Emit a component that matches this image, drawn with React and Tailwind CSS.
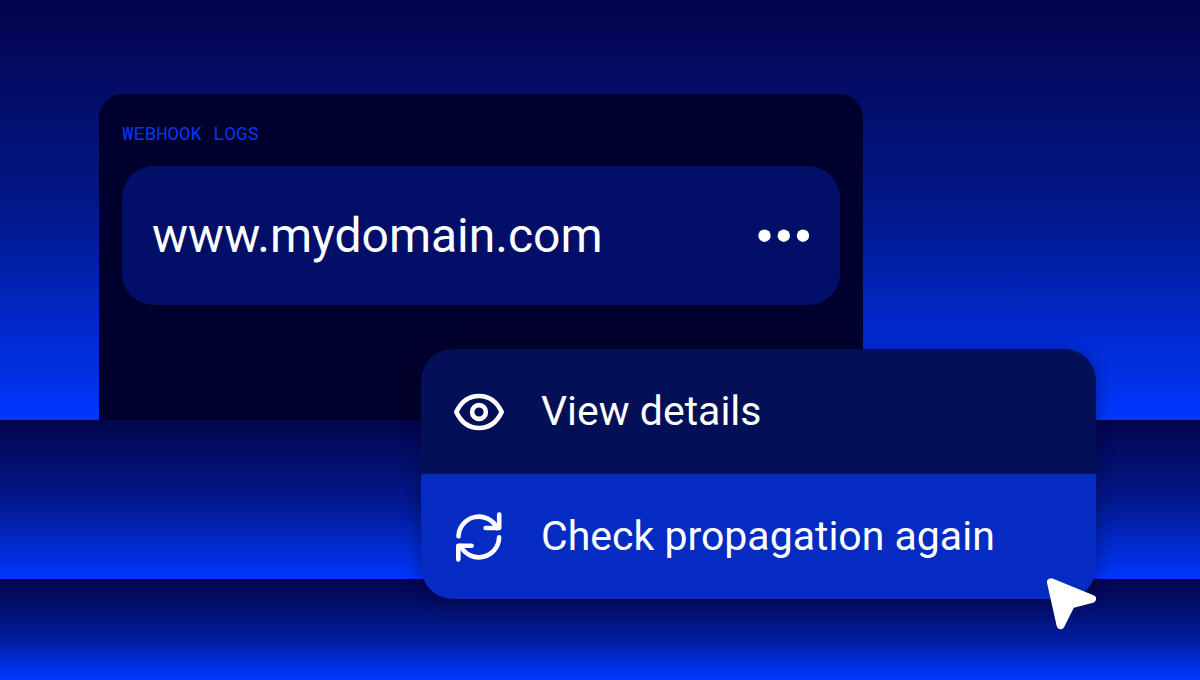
import React from "react";

const EyeIcon = () => (
  <svg
    viewBox="0 0 56 56"
    className="size-14 shrink-0"
    fill="none"
    stroke="currentColor"
    strokeWidth="4.6"
    strokeLinecap="round"
    strokeLinejoin="round"
    aria-hidden="true"
  >
    <path d="M5.3 28C10 18 18 12 28 12s18 6 22.7 16C46 38 38 44 28 44S10 38 5.3 28Z" />
    <circle cx="28" cy="28" r="6.9" />
  </svg>
);

const RefreshIcon = () => (
  <svg
    viewBox="0 0 56 56"
    className="size-14 shrink-0"
    fill="none"
    stroke="currentColor"
    strokeWidth="4.6"
    strokeLinecap="round"
    strokeLinejoin="round"
    aria-hidden="true"
  >
    <path d="M7.5 27.3A20.3 20.3 0 0 1 46 19" />
    <path d="M48.2 5.6V19H34.6" />
    <path d="M48.1 28.3A20.3 20.3 0 0 1 9.6 37" />
    <path d="M7.3 50.4V36.8H20.6" />
  </svg>
);

const DotsIcon = () => (
  <svg viewBox="0 0 52 14" className="h-[14px] w-[52px]" fill="currentColor" aria-hidden="true">
    <circle cx="6.5" cy="6.7" r="6.2" />
    <circle cx="25.8" cy="6.7" r="6.2" />
    <circle cx="45" cy="6.7" r="6.2" />
  </svg>
);

const Pointer = () => (
  <svg
    viewBox="0 0 50 52"
    className="absolute top-[229px] right-0 h-[52px] w-[50px] text-white"
    fill="currentColor"
    stroke="currentColor"
    strokeWidth="8"
    strokeLinejoin="round"
    aria-hidden="true"
  >
    <path d="M5 4.3 46 21 25 26.5 14.6 47.2Z" />
  </svg>
);

const menuItems = [
  { label: "View details", icon: EyeIcon, className: "bg-[#030f57]" },
  { label: "Check propagation again", icon: RefreshIcon, className: "bg-[#042bc2]" },
];

const ContextMenu = () => (
  <div className="absolute top-[349px] left-[421px] w-[675px]">
    <ul className="overflow-hidden rounded-[32px] shadow-[0_4px_16px_rgba(0,0,40,0.45)]">
      {menuItems.map(({ label, icon: Icon, className }) => (
        <li key={label} className={className}>
          <button type="button" className="flex h-[125px] w-full items-center gap-[34px] px-[30px] text-left text-[41px]">
            <Icon />
            {label}
          </button>
        </li>
      ))}
    </ul>
    <Pointer />
  </div>
);

const App = () => {
  return (
    <main className="relative flex min-h-screen flex-col overflow-hidden font-['Roboto',sans-serif] text-white">
      <div className="flex bg-linear-to-b/srgb from-[#04044c] via-[#02188a] to-[#0037ff] pt-[94px] pr-6 pl-[99px]">
        <section className="h-[326px] w-full max-w-[764px] rounded-t-3xl bg-[#00002c] px-[23px] pt-6">
          <h1 className="font-['Roboto_Mono','Liberation_Mono',monospace] text-[19px] leading-[30px] text-[#0337f5] uppercase">
            Webhook logs
          </h1>
          <div className="mt-[18px] flex h-[139px] items-center justify-between rounded-[32px] bg-[#010f69] px-[30px]">
            <span className="text-[48px]">www.mydomain.com</span>
            <button type="button" aria-label="More actions">
              <DotsIcon />
            </button>
          </div>
        </section>
      </div>
      <div className="h-[159px] bg-linear-to-b/srgb from-[#04044c] via-[#02188a] to-[#0037ff]" />
      <div className="min-h-[101px] flex-1 bg-linear-to-b/srgb from-[#04044c] via-[#02188a] to-[#0037ff]" />
      <ContextMenu />
    </main>
  );
};

export default App;
